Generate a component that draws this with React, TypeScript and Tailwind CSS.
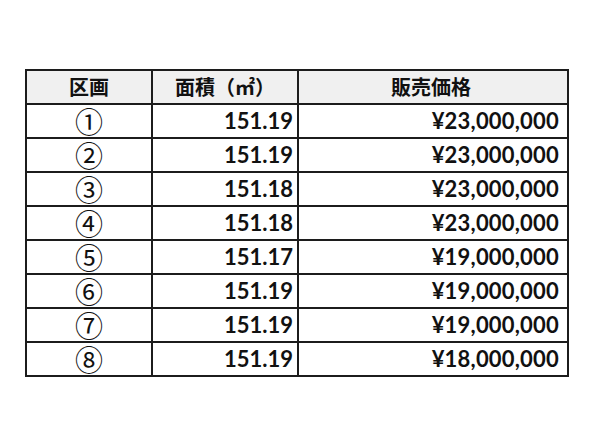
import React from "react";

const rows = [
  { k: "①", a: "151.19", p: "¥23,000,000" },
  { k: "②", a: "151.19", p: "¥23,000,000" },
  { k: "③", a: "151.18", p: "¥23,000,000" },
  { k: "④", a: "151.18", p: "¥23,000,000" },
  { k: "⑤", a: "151.17", p: "¥19,000,000" },
  { k: "⑥", a: "151.19", p: "¥19,000,000" },
  { k: "⑦", a: "151.19", p: "¥19,000,000" },
  { k: "⑧", a: "151.19", p: "¥18,000,000" },
];

export default function App() {
  return (
    <div className="w-[600px] h-[448px] bg-white pl-[25px] pt-[69px]">
      <div className="w-[544px] border-2 border-[#1c1c1c] flex flex-col text-[#111]">
        <div className="flex h-[34px] bg-[#f0f0f0] border-b-2 border-[#1c1c1c] font-['Noto_Sans_CJK_JP',sans-serif] text-[20px] font-bold">
          <div className="w-[126px] border-r-2 border-[#1c1c1c] flex items-center justify-center">区画</div>
          <div className="w-[146px] border-r-2 border-[#1c1c1c] flex items-center justify-center">面積（㎡）</div>
          <div className="w-[264px] flex items-center justify-center">販売価格</div>
        </div>
        {rows.map((r, i) => (
          <div
            key={i}
            className={i < rows.length - 1 ? "flex h-[34px] border-b-2 border-[#1c1c1c]" : "flex h-[32px]"}
          >
            <div className="w-[126px] border-r-2 border-[#1c1c1c] flex items-center justify-center text-[28px] leading-[28px] font-['Noto_Sans_CJK_JP',sans-serif]">
              {r.k}
            </div>
            <div className="w-[146px] border-r-2 border-[#1c1c1c] flex items-center justify-end pr-[4px] text-[22px] font-bold leading-none font-['Lato',sans-serif]">
              {r.a}
            </div>
            <div className="w-[264px] flex items-center justify-end pr-[4px] text-[22px] font-bold leading-none tracking-[0.2px] font-['Lato',sans-serif]">
              {r.p}
            </div>
          </div>
        ))}
      </div>
    </div>
  );
}
